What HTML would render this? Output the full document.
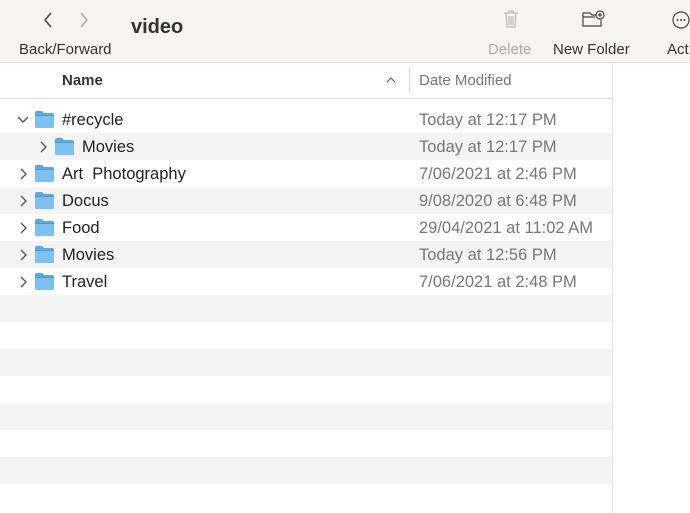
<!DOCTYPE html>
<html><head><style>
body{margin:0;width:690px;height:513px;overflow:hidden;background:#fff;font-family:"Liberation Sans",sans-serif;position:relative}
.tb{position:absolute;left:0;top:0;width:690px;height:62px;background:#f6f5f4;border-bottom:1px solid #dcdcdc}
.t{position:absolute;white-space:nowrap}
.hdr{position:absolute;left:0;top:63px;width:612px;height:35px;border-bottom:1px solid #e2e2e2;background:#fff}
.row{position:absolute;left:0;width:612px;height:27px}
.g{background:#f4f4f4}
.nm{position:absolute;top:5px;font-size:16.5px;color:#222}
.dt{position:absolute;left:419px;top:5px;font-size:16.5px;color:#777}
.chev{position:absolute;top:5px;font-size:14px;color:#555}
.vl{position:absolute;left:612px;top:63px;width:1px;height:450px;background:#e4e4e4}
</style></head><body>
<div class="tb">
<svg class="t" style="left:42px;top:11px" width="12" height="18"><path d="M9 2 L3 9 L9 16" fill="none" stroke="#444" stroke-width="1.5"/></svg>
<svg class="t" style="left:78px;top:11px" width="12" height="18"><path d="M3 2 L9 9 L3 16" fill="none" stroke="#aaa" stroke-width="1.5"/></svg>
<div class="t" style="left:131px;top:16px;font-size:20px;font-weight:bold;color:#333">video</div>
<div class="t" style="left:19px;top:41px;font-size:15px;color:#333">Back/Forward</div>
<svg class="t" style="left:502px;top:9px" width="18" height="20"><path d="M2 4H16M7 4V2H11V4M4 4L5 18H13L14 4M7 7V16M9 7V16M11 7V16" fill="none" stroke="#bbb" stroke-width="1.2"/></svg>
<div class="t" style="left:488px;top:41px;font-size:15px;color:#aaa">Delete</div>
<svg class="t" style="left:581px;top:9px" width="26" height="20"><path d="M2 4H9L11 6H15M2 4V17H20V11M2 8H14" fill="none" stroke="#444" stroke-width="1.2"/><circle cx="19" cy="6" r="4" fill="none" stroke="#444" stroke-width="1.2"/><path d="M19 4V8M17 6H21" stroke="#444" stroke-width="1.2"/></svg>
<div class="t" style="left:553px;top:41px;font-size:15px;color:#333">New Folder</div>
<svg class="t" style="left:671px;top:10px" width="19" height="20"><circle cx="10" cy="10" r="8" fill="none" stroke="#444" stroke-width="1.2"/><circle cx="6.5" cy="10" r="1" fill="#444"/><circle cx="10" cy="10" r="1" fill="#444"/><circle cx="13.5" cy="10" r="1" fill="#444"/></svg>
<div class="t" style="left:667px;top:41px;font-size:15px;color:#333">Act</div>
</div>
<div class="hdr">
<div class="t" style="left:62px;top:9px;font-size:15px;font-weight:bold;color:#333">Name</div>
<svg class="t" style="left:385px;top:13px" width="12" height="8"><path d="M2 6L6 2L10 6" fill="none" stroke="#666" stroke-width="1.2"/></svg>
<div class="t" style="left:409px;top:4px;width:1px;height:26px;background:#e0e0e0"></div>
<div class="t" style="left:419px;top:9px;font-size:15px;color:#777">Date Modified</div>
</div>
<div class="vl"></div>
<div id="rows"></div>
<script>
var d=[["#recycle","Today at 12:17 PM",0,1],["Movies","Today at 12:17 PM",1,0],["Art&nbsp; Photography","7/06/2021 at 2:46 PM",0,0],["Docus","9/08/2020 at 6:48 PM",0,0],["Food","29/04/2021 at 11:02 AM",0,0],["Movies","Today at 12:56 PM",0,0],["Travel","7/06/2021 at 2:48 PM",0,0]];
var h="";
for(var i=0;i<15;i++){var y=106+i*27;h+='<div class="row'+(i%2?' g':'')+'" style="top:'+y+'px">';
if(i<7){var r=d[i],o=r[2]?20:0;
h+=r[3]?'<svg class="chev" style="left:'+(16+o)+'px;top:9px" width="14" height="10"><path d="M2 2L7 7L12 2" fill="none" stroke="#555" stroke-width="1.4"/></svg>':'<svg class="chev" style="left:'+(19+o)+'px;top:7px" width="10" height="14"><path d="M2 2L7 7L2 12" fill="none" stroke="#555" stroke-width="1.4"/></svg>';
h+='<svg class="chev" style="left:'+(34+o)+'px;top:4px" width="21" height="19"><path d="M1 3Q1 1 3 1H8L10 3H18Q20 3 20 5V6H1Z" fill="#5aa9e0"/><path d="M1 5H20V17Q20 18 19 18H2Q1 18 1 17Z" fill="#7ec1ee"/><path d="M1 5.5H20" stroke="#4c9bd6" stroke-width="1"/></svg>';
h+='<div class="nm" style="left:'+(62+o)+'px">'+r[0]+'</div><div class="dt">'+r[1]+'</div>';}
h+='</div>';}
document.getElementById("rows").innerHTML=h;
</script>
</body></html>
